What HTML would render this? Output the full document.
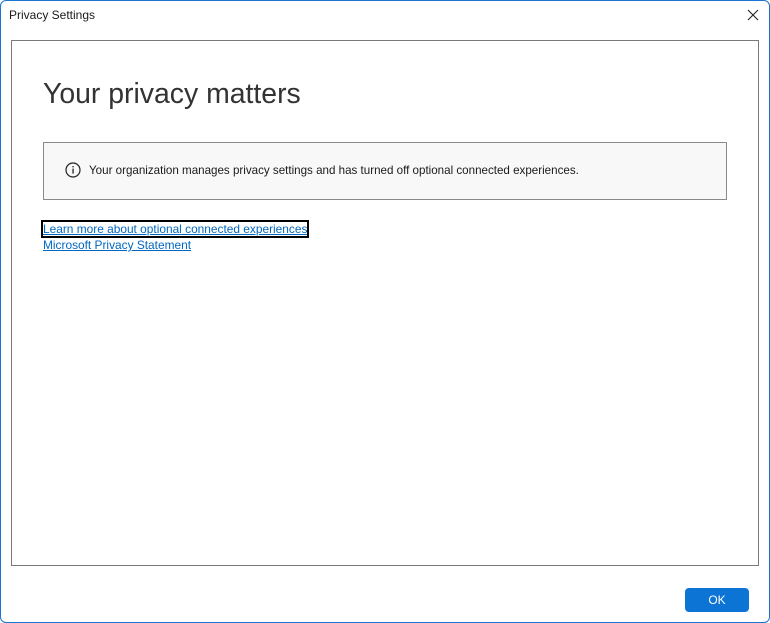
<!DOCTYPE html>
<html><head><style>
body{margin:0;width:770px;height:623px;background:#fff;font-family:"Liberation Sans",sans-serif;position:relative;overflow:hidden}
.win{position:absolute;left:0;top:0;width:768px;height:621px;border:1px solid #1b74d0;border-radius:6px;background:#fff}
.title{position:absolute;left:8px;top:7px;font-size:12px;color:#1a1a1a}
.close{position:absolute;left:746px;top:8px;width:12px;height:12px}
.panel{position:absolute;left:10px;top:39px;width:746px;height:524px;border:1px solid #7a7a7a}
h1{position:absolute;left:31px;top:37px;margin:0;font-weight:300;font-size:28.4px;color:#333;letter-spacing:0px}
.info{position:absolute;left:31px;top:101px;width:682px;height:56px;border:1px solid #8a8a8a;background:#f8f8f8}
.info span{position:absolute;left:45px;top:21px;font-size:11.6px;color:#1a1a1a}
.ic{position:absolute;left:21px;top:19px}
a{position:absolute;left:31px;font-size:11.9px;color:#0067c0;text-decoration:underline}
.l1{top:181px;outline:2px solid #000;outline-offset:0;line-height:14px}
.l2{top:197px;line-height:14px}
.ok{position:absolute;left:684px;top:587px;width:64px;height:24px;background:#0b74d4;border-radius:4px;color:#fff;font-size:12px;text-align:center;line-height:24px}
</style></head><body>
<div class="win">
<div class="title">Privacy Settings</div>
<svg class="close" viewBox="0 0 12 12"><path d="M1 1L11 11M11 1L1 11" stroke="#222" stroke-width="1.1"/></svg>
<div class="panel">
<h1>Your privacy matters</h1>
<div class="info"><svg class="ic" width="16" height="16" viewBox="0 0 16 16"><circle cx="8" cy="8" r="7" fill="none" stroke="#222" stroke-width="1.2"/><rect x="7.4" y="6.6" width="1.3" height="5" fill="#222"/><rect x="7.4" y="4" width="1.3" height="1.4" fill="#222"/></svg><span>Your organization manages privacy settings and has turned off optional connected experiences.</span></div>
<a class="l1">Learn more about optional connected experiences</a>
<a class="l2">Microsoft Privacy Statement</a>
</div>
<div class="ok">OK</div>
</div>
</body></html>
